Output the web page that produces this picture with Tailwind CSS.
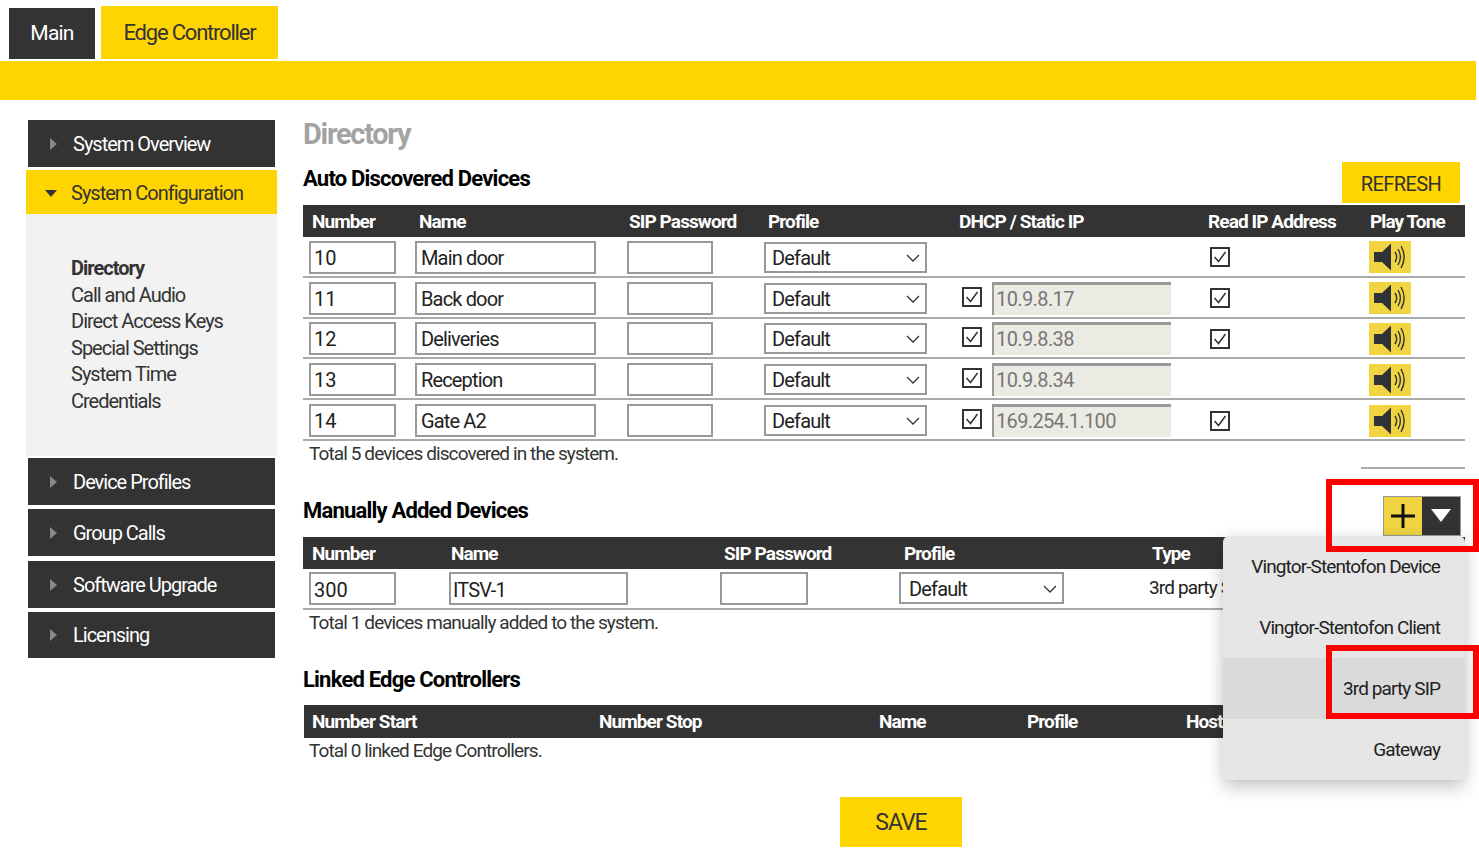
<!DOCTYPE html>
<html lang="en">
<head>
    <meta charset="UTF-8">
    <title>Directory</title>
    <script src="https://cdn.jsdelivr.net/npm/@tailwindcss/browser@4"></script>
</head>
<body class="bg-white overflow-hidden font-['Roboto',sans-serif] text-[19px] tracking-[-0.9px] text-[#222]">
<svg class="hidden">
    <symbol id="spk" viewBox="0 0 42 32">
        <path d="M5 11h8l9-8.500v27l-9-8.500H5z" fill="#2f3236"/>
        <path d="M26 11c2 3 2 7 0 10M29 8c3 5 3 11 0 16M32 5c4 7 4 15 0 22" fill="none" stroke="#2f3236" stroke-width="1.4"/>
    </symbol>
    <symbol id="chk" viewBox="0 0 20 20">
        <rect x="1" y="1" width="18" height="18" fill="#fff" stroke="#333" stroke-width="2"/>
        <path d="M4.500 10l4 4.500 7-9.500" fill="none" stroke="#333" stroke-width="1.500"/>
    </symbol>
    <symbol id="sel" viewBox="0 0 14 8">
        <path d="M1 1l6 6 6-6" fill="none" stroke="#333" stroke-width="1.300"/>
    </symbol>
</svg>

<div class="relative w-[1479px] h-[855px] overflow-hidden">
    <!-- tabs -->
    <div class="flex items-end h-[59px]">
        <div class="ml-[9px] w-[86px] h-[51px] bg-[#333] text-white text-[21px] tracking-[-0.8px] flex items-center justify-center">Main</div>
        <div class="ml-[6px] w-[177px] h-[53px] bg-[#ffd500] text-[#333] text-[22px] tracking-[-1.2px] flex items-center justify-center">Edge Controller</div>
    </div>
    <div class="mt-[2px] w-[1476px] h-[39px] bg-[#ffd500]"></div>

    <div class="flex">
        <!-- sidebar -->
        <aside class="ml-[26px] w-[251px] mt-[20px] shrink-0 text-[20px] tracking-[-1px]">
            <div class="mx-[2px] h-[47px] bg-[#333] text-white flex items-center">
                <span class="ml-[22px] w-0 h-0 border-y-[6px] border-y-transparent border-l-[7px] border-l-[#888]"></span>
                <span class="ml-[16px]">System Overview</span>
            </div>
            <div class="mt-[3px] h-[44px] pt-[2px] bg-[#ffd500] text-[#333] flex items-center">
                <span class="ml-[19px] w-0 h-0 border-x-[6px] border-x-transparent border-t-[7px] border-t-[#333]"></span>
                <span class="ml-[14px]">System Configuration</span>
            </div>
            <div class="h-[242px] bg-[#f2f2f2] pt-[41px] pl-[45px] text-[#333] leading-[26.5px]">
                <div class="font-bold">Directory</div>
                <div>Call and Audio</div>
                <div>Direct Access Keys</div>
                <div>Special Settings</div>
                <div>System Time</div>
                <div>Credentials</div>
            </div>
            <div class="mt-[2px] mx-[2px] h-[47px] bg-[#333] text-white flex items-center">
                <span class="ml-[22px] w-0 h-0 border-y-[6px] border-y-transparent border-l-[7px] border-l-[#888]"></span>
                <span class="ml-[16px]">Device Profiles</span>
            </div>
            <div class="mt-[4px] mx-[2px] h-[47px] bg-[#333] text-white flex items-center">
                <span class="ml-[22px] w-0 h-0 border-y-[6px] border-y-transparent border-l-[7px] border-l-[#888]"></span>
                <span class="ml-[16px]">Group Calls</span>
            </div>
            <div class="mt-[5px] mx-[2px] h-[47px] bg-[#333] text-white flex items-center">
                <span class="ml-[22px] w-0 h-0 border-y-[6px] border-y-transparent border-l-[7px] border-l-[#888]"></span>
                <span class="ml-[16px]">Software Upgrade</span>
            </div>
            <div class="mt-[4px] mx-[2px] h-[46px] bg-[#333] text-white flex items-center">
                <span class="ml-[22px] w-0 h-0 border-y-[6px] border-y-transparent border-l-[7px] border-l-[#888]"></span>
                <span class="ml-[16px]">Licensing</span>
            </div>
        </aside>

        <!-- main -->
        <main class="ml-[26px] w-[1162px] shrink-0">
            <h1 class="mt-[17px] h-[34px] leading-[34px] text-[29px] tracking-[-1.3px] font-bold text-[#a3a3a3]">Directory</h1>

            <div class="flex justify-between h-[54px]">
                <h2 class="mt-[13px] h-[30px] leading-[30px] text-[22px] tracking-[-0.8px] font-bold text-black">Auto Discovered Devices</h2>
                <button class="mt-[11px] mr-[5px] w-[118px] h-[41px] pt-[2px] bg-[#ffd500] text-[#333] text-[20px] tracking-[-0.6px]">REFRESH</button>
            </div>

            <div class="flex items-center h-[32px] pt-[2px] bg-[#333] text-white font-bold text-[19px]">
                <span class="ml-[9px] w-[107px]">Number</span>
                <span class="w-[210px]">Name</span>
                <span class="w-[139px]">SIP Password</span>
                <span class="w-[191px]">Profile</span>
                <span class="w-[249px]">DHCP / Static IP</span>
                <span class="w-[162px]">Read IP Address</span>
                <span>Play Tone</span>
            </div>

            <!-- row -->
            <div class="flex items-center h-[40.8px] pt-[2px] border-b-2 border-[#aaa] tracking-normal text-[20px]">
                <div class="ml-[6px] w-[87px] h-[33px] border-2 border-[#999] pl-[3px] leading-[31px]">10</div>
                <div class="ml-[19px] w-[181px] h-[33px] border-2 border-[#999] pl-[4px] leading-[31px] tracking-[-0.85px]">Main door</div>
                <div class="ml-[31px] w-[86px] h-[33px] border-2 border-[#999]"></div>
                <div class="ml-[51px] w-[163px] h-[31px] border-2 border-[#999] pl-[6px] pr-[5px] pt-[1px] flex justify-between items-center tracking-[-0.85px]">Default<svg class="w-[14px] h-[8px]"><use href="#sel"/></svg></div>
                <div class="ml-[283px] w-[20px] h-[20px]"><svg class="w-[20px] h-[20px]"><use href="#chk"/></svg></div>
                <div class="ml-[139px] w-[42px] h-[32px] bg-[#f0d442]"><svg class="w-[42px] h-[32px]"><use href="#spk"/></svg></div>
            </div>
            <div class="flex items-center h-[40.8px] pt-[2px] border-b-2 border-[#aaa] tracking-normal text-[20px]">
                <div class="ml-[6px] w-[87px] h-[33px] border-2 border-[#999] pl-[3px] leading-[31px]">11</div>
                <div class="ml-[19px] w-[181px] h-[33px] border-2 border-[#999] pl-[4px] leading-[31px] tracking-[-0.85px]">Back door</div>
                <div class="ml-[31px] w-[86px] h-[33px] border-2 border-[#999]"></div>
                <div class="ml-[51px] w-[163px] h-[31px] border-2 border-[#999] pl-[6px] pr-[5px] pt-[1px] flex justify-between items-center tracking-[-0.85px]">Default<svg class="w-[14px] h-[8px]"><use href="#sel"/></svg></div>
                <div class="ml-[35px] w-[20px] h-[20px] -mt-[3px]"><svg class="w-[20px] h-[20px]"><use href="#chk"/></svg></div>
                <div class="ml-[10px] w-[179px] h-[33px] bg-[#ebebe4] border-t-[3px] border-l-[2px] border-[#999] pl-[2px] text-[#777] leading-[29px] tracking-[-0.6px]">10.9.8.17</div>
                <div class="ml-[39px] w-[20px] h-[20px]"><svg class="w-[20px] h-[20px]"><use href="#chk"/></svg></div>
                <div class="ml-[139px] w-[42px] h-[32px] bg-[#f0d442]"><svg class="w-[42px] h-[32px]"><use href="#spk"/></svg></div>
            </div>
            <div class="flex items-center h-[40.8px] pt-[2px] border-b-2 border-[#aaa] tracking-normal text-[20px]">
                <div class="ml-[6px] w-[87px] h-[33px] border-2 border-[#999] pl-[3px] leading-[31px]">12</div>
                <div class="ml-[19px] w-[181px] h-[33px] border-2 border-[#999] pl-[4px] leading-[31px] tracking-[-0.85px]">Deliveries</div>
                <div class="ml-[31px] w-[86px] h-[33px] border-2 border-[#999]"></div>
                <div class="ml-[51px] w-[163px] h-[31px] border-2 border-[#999] pl-[6px] pr-[5px] pt-[1px] flex justify-between items-center tracking-[-0.85px]">Default<svg class="w-[14px] h-[8px]"><use href="#sel"/></svg></div>
                <div class="ml-[35px] w-[20px] h-[20px] -mt-[3px]"><svg class="w-[20px] h-[20px]"><use href="#chk"/></svg></div>
                <div class="ml-[10px] w-[179px] h-[33px] bg-[#ebebe4] border-t-[3px] border-l-[2px] border-[#999] pl-[2px] text-[#777] leading-[29px] tracking-[-0.6px]">10.9.8.38</div>
                <div class="ml-[39px] w-[20px] h-[20px]"><svg class="w-[20px] h-[20px]"><use href="#chk"/></svg></div>
                <div class="ml-[139px] w-[42px] h-[32px] bg-[#f0d442]"><svg class="w-[42px] h-[32px]"><use href="#spk"/></svg></div>
            </div>
            <div class="flex items-center h-[40.8px] pt-[2px] border-b-2 border-[#aaa] tracking-normal text-[20px]">
                <div class="ml-[6px] w-[87px] h-[33px] border-2 border-[#999] pl-[3px] leading-[31px]">13</div>
                <div class="ml-[19px] w-[181px] h-[33px] border-2 border-[#999] pl-[4px] leading-[31px] tracking-[-0.85px]">Reception</div>
                <div class="ml-[31px] w-[86px] h-[33px] border-2 border-[#999]"></div>
                <div class="ml-[51px] w-[163px] h-[31px] border-2 border-[#999] pl-[6px] pr-[5px] pt-[1px] flex justify-between items-center tracking-[-0.85px]">Default<svg class="w-[14px] h-[8px]"><use href="#sel"/></svg></div>
                <div class="ml-[35px] w-[20px] h-[20px] -mt-[3px]"><svg class="w-[20px] h-[20px]"><use href="#chk"/></svg></div>
                <div class="ml-[10px] w-[179px] h-[33px] bg-[#ebebe4] border-t-[3px] border-l-[2px] border-[#999] pl-[2px] text-[#777] leading-[29px] tracking-[-0.6px]">10.9.8.34</div>
                <div class="ml-[198px] w-[42px] h-[32px] bg-[#f0d442]"><svg class="w-[42px] h-[32px]"><use href="#spk"/></svg></div>
            </div>
            <div class="flex items-center h-[40.8px] pt-[2px] border-b-2 border-[#aaa] tracking-normal text-[20px]">
                <div class="ml-[6px] w-[87px] h-[33px] border-2 border-[#999] pl-[3px] leading-[31px]">14</div>
                <div class="ml-[19px] w-[181px] h-[33px] border-2 border-[#999] pl-[4px] leading-[31px] tracking-[-0.85px]">Gate A2</div>
                <div class="ml-[31px] w-[86px] h-[33px] border-2 border-[#999]"></div>
                <div class="ml-[51px] w-[163px] h-[31px] border-2 border-[#999] pl-[6px] pr-[5px] pt-[1px] flex justify-between items-center tracking-[-0.85px]">Default<svg class="w-[14px] h-[8px]"><use href="#sel"/></svg></div>
                <div class="ml-[35px] w-[20px] h-[20px] -mt-[3px]"><svg class="w-[20px] h-[20px]"><use href="#chk"/></svg></div>
                <div class="ml-[10px] w-[179px] h-[33px] bg-[#ebebe4] border-t-[3px] border-l-[2px] border-[#999] pl-[2px] text-[#777] leading-[29px] tracking-[-0.65px]">169.254.1.100</div>
                <div class="ml-[39px] w-[20px] h-[20px]"><svg class="w-[20px] h-[20px]"><use href="#chk"/></svg></div>
                <div class="ml-[139px] w-[42px] h-[32px] bg-[#f0d442]"><svg class="w-[42px] h-[32px]"><use href="#spk"/></svg></div>
            </div>

            <div class="flex justify-between h-[28px]">
                <span class="ml-[6px] mt-[1px] leading-[24px] text-[#333]">Total 5 devices discovered in the system.</span>
                <span class="w-[104px] h-[28px] border-b-2 border-[#aaa]"></span>
            </div>

            <!-- manually added -->
            <div class="flex justify-between h-[68px]">
                <h2 class="mt-[27px] h-[30px] leading-[30px] text-[22px] tracking-[-0.8px] font-bold text-black">Manually Added Devices</h2>
                <div class="mt-[27px] mr-[4px] flex h-[40px] border border-[#999]">
                    <span class="w-[38px] bg-[#f0d442] flex items-center justify-center">
                        <svg class="w-[26px] h-[26px]" viewBox="0 0 26 26"><path d="M13 1v24M1 13h24" stroke="#111" stroke-width="3"/></svg>
                    </span>
                    <span class="w-[38px] bg-[#333] flex items-center justify-center">
                        <span class="w-0 h-0 border-x-[10px] border-x-transparent border-t-[13px] border-t-white"></span>
                    </span>
                </div>
            </div>

            <div class="flex items-center h-[32px] pt-[2px] bg-[#333] text-white font-bold text-[19px]">
                <span class="ml-[9px] w-[139px]">Number</span>
                <span class="w-[273px]">Name</span>
                <span class="w-[180px]">SIP Password</span>
                <span class="w-[248px]">Profile</span>
                <span>Type</span>
            </div>
            <div class="flex items-center h-[41px] border-b-2 border-[#aaa] tracking-normal text-[20px]">
                <div class="ml-[6px] w-[87px] h-[33px] border-2 border-[#999] pl-[3px] leading-[32px]">300</div>
                <div class="ml-[53px] w-[179px] h-[33px] border-2 border-[#999] pl-[2px] leading-[32px] tracking-[-0.85px]">ITSV-1</div>
                <div class="ml-[92px] w-[88px] h-[33px] border-2 border-[#999]"></div>
                <div class="ml-[91px] w-[165px] h-[32px] border-2 border-[#999] pl-[8px] pr-[5px] pt-[2px] flex justify-between items-center tracking-[-0.85px]">Default<svg class="w-[14px] h-[8px]"><use href="#sel"/></svg></div>
                <span class="ml-[85px] whitespace-nowrap text-[19px] tracking-[-0.85px]">3rd party SIP</span>
            </div>
            <div class="ml-[6px] mt-[1px] leading-[24px] h-[24px] text-[#333]">Total 1 devices manually added to the system.</div>

            <!-- linked -->
            <h2 class="mt-[30px] h-[30px] leading-[30px] text-[22px] tracking-[-0.8px] font-bold text-black">Linked Edge Controllers</h2>
            <div class="mt-[10px] flex items-center h-[33px] pt-[2px] bg-[#333] text-white font-bold text-[19px] ml-[1px]">
                <span class="ml-[8px] w-[287px]">Number Start</span>
                <span class="w-[280px]">Number Stop</span>
                <span class="w-[148px]">Name</span>
                <span class="w-[159px]">Profile</span>
                <span>Host</span>
            </div>
            <div class="ml-[6px] mt-[1px] leading-[24px] h-[24px] text-[#333]">Total 0 linked Edge Controllers.</div>

            <button class="mt-[34px] ml-[537px] w-[122px] h-[50px] pt-[2px] bg-[#ffd500] text-[#333] text-[23px] tracking-[-1px]">SAVE</button>
        </main>
    </div>

    <!-- dropdown menu -->
    <div class="absolute left-[1223px] top-[536px] w-[242px] h-[244px] rounded-[6px] bg-[#e6e6e6] shadow-[0_6px_18px_rgba(0,0,0,0.25)] flex flex-col text-right text-[#222]">
        <div class="h-[61px] leading-[61px] pr-[25px]">Vingtor-Stentofon Device</div>
        <div class="h-[61px] leading-[61px] pr-[25px]">Vingtor-Stentofon Client</div>
        <div class="h-[61px] leading-[61px] pr-[25px] bg-[#dadada]">3rd party SIP</div>
        <div class="h-[61px] leading-[61px] pr-[25px]">Gateway</div>
    </div>

    <!-- red annotation boxes -->
    <div class="absolute left-[1326px] top-[479px] w-[153px] h-[73px] border-[6px] border-[#ff0000]"></div>
    <div class="absolute left-[1326px] top-[645px] w-[153px] h-[74px] border-[6px] border-[#ff0000]"></div>
</div>
</body>
</html>
